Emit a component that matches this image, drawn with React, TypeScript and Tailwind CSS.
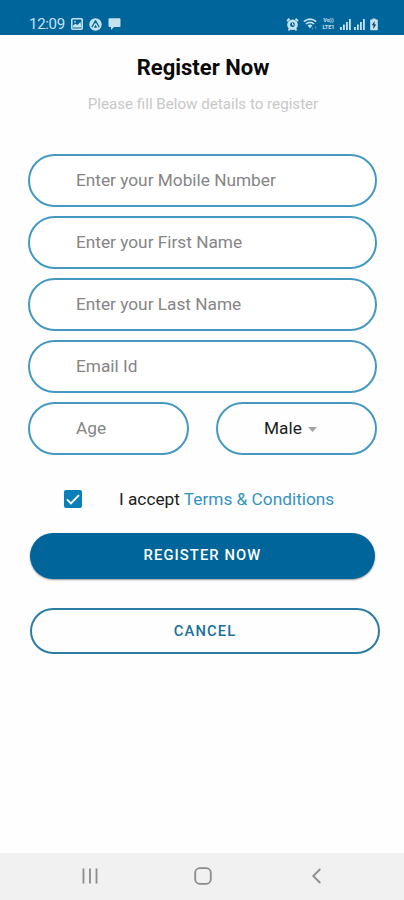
import { useState } from 'react';

const fieldClass =
    'h-[53px] rounded-full border-2 border-[#4598bf] bg-white pb-[2px] pl-[46px] text-[17.25px] text-[#222222] placeholder:text-[#858585] placeholder:opacity-100 outline-none';

const fields = [
    { name: 'mobile', type: 'tel', placeholder: 'Enter your Mobile Number' },
    { name: 'firstName', type: 'text', placeholder: 'Enter your First Name' },
    { name: 'lastName', type: 'text', placeholder: 'Enter your Last Name' },
    { name: 'email', type: 'email', placeholder: 'Email Id' },
];

function SignalIcon() {
    return (
        <svg className="h-[12px] w-[11px]" viewBox="0 0 11 12" fill="currentColor">
            <rect x="0" y="9" width="1.8" height="3" />
            <rect x="3" y="6.5" width="1.8" height="5.5" />
            <rect x="6" y="4" width="1.8" height="8" />
            <rect x="9" y="1" width="1.8" height="11" />
        </svg>
    );
}

function StatusBar() {
    return (
        <header className="flex h-[35px] items-end justify-between bg-[#00659a] pb-[3px] pl-[29px] pr-[26px] text-[#c5e2ef]">
            <div className="flex h-[16px] items-center">
                <span className="w-[42px] text-[15px] leading-4 tracking-[-0.3px]">12:09</span>
                {/* Picture */}
                <svg className="h-[12px] w-[12px]" viewBox="0 0 12 12">
                    <rect x="0.8" y="0.8" width="10.4" height="10.4" rx="1" fill="none" stroke="currentColor" strokeWidth="1.6" />
                    <path d="M2 9.5V7.5l2.5-1.8 1.8 1.4L9.5 4l0.9 5.5z" fill="currentColor" />
                    <circle cx="4" cy="3.8" r="0.9" fill="currentColor" />
                </svg>
                {/* App badge */}
                <svg className="ml-[6px] h-[13px] w-[13px]" viewBox="0 0 13 13">
                    <circle cx="6.5" cy="6.5" r="6.2" fill="currentColor" />
                    <path d="M6.5 2.5L2.8 9.3M6.5 2.5l3.7 6.8M6.5 2.8v2.5" stroke="#00659a" strokeWidth="1.3" fill="none" />
                    <path d="M4.8 9.8L6.5 6.7l1.7 3.1z" fill="#00659a" />
                </svg>
                {/* Message */}
                <svg className="ml-[6px] h-[12px] w-[13px]" viewBox="0 0 13 12" fill="currentColor">
                    <path d="M1.5 0.3h10q1 0 1 1v6.7q0 1-1 1H6L3 12V9H1.5q-1 0-1-1V1.3q0-1 1-1z" />
                </svg>
            </div>
            <div className="flex h-[16px] items-center">
                {/* Alarm */}
                <svg className="h-[13px] w-[13px]" viewBox="0 0 12 13" fill="none" stroke="currentColor">
                    <path d="M0.5 3L3 0.8M11.5 3L9 0.8M2 12.3l1.3-1.5M10 12.3l-1.3-1.5" strokeWidth="1.8" />
                    <circle cx="6" cy="6.7" r="5.3" fill="currentColor" stroke="none" />
                    <circle cx="6" cy="6.7" r="2.4" fill="#00659a" stroke="none" />
                    <path d="M6 4.8v2.1h1.8" strokeWidth="1" />
                </svg>
                {/* Wi-Fi */}
                <svg className="ml-[4px] h-[12px] w-[15px]" viewBox="0 0 15 12" fill="none" stroke="currentColor">
                    <path d="M0.8 3.7Q7-1.6 13.2 3.7M2.9 6Q7 2.6 11.1 6" strokeWidth="1.6" />
                    <path d="M4.6 7.4Q7 5.6 9.4 7.4L7 10.2z" fill="currentColor" stroke="none" />
                    <path d="M9.3 9.5v2M12.7 8.5v2" strokeWidth="1" opacity="0.5" />
                </svg>
                <div className="ml-[3px] flex w-[15px] flex-col items-center text-[5.5px] font-bold leading-[7px]">
                    <span>Vo))</span>
                    <span>LTE1</span>
                </div>
                <div className="ml-[4px] flex gap-[3px]">
                    <SignalIcon />
                    <SignalIcon />
                </div>
                {/* Battery */}
                <svg className="ml-[5px] h-[13px] w-[8px]" viewBox="0 0 8 13">
                    <path d="M2.5 0.5h3v1H7q0.8 0 0.8 0.8v9.2q0 0.8-0.8 0.8H1q-0.8 0-0.8-0.8V2.3q0-0.8 0.8-0.8h1.5z" fill="currentColor" />
                    <path d="M4.7 3L1.8 7.2h1.8L3.2 11l3-4.5H4.4z" fill="#0b3f5c" />
                </svg>
            </div>
        </header>
    );
}

function NavigationBar() {
    return (
        <nav className="flex h-[47px] items-center bg-[#f1f1f1] pb-[2px] pl-[82px] text-[#8c8c8c]">
            <button aria-label="Recent apps">
                <svg className="h-[16px] w-[16px]" viewBox="0 0 16 16" stroke="currentColor" strokeWidth="1.8">
                    <path d="M1.5 0.5v15M8 0.5v15M14.5 0.5v15" />
                </svg>
            </button>
            <button aria-label="Home" className="ml-[96px]">
                <svg className="h-[18px] w-[18px]" viewBox="0 0 18 18" fill="none" stroke="currentColor" strokeWidth="1.8">
                    <rect x="1.2" y="1.2" width="15.6" height="15.6" rx="4.5" />
                </svg>
            </button>
            <button aria-label="Back" className="ml-[100px]">
                <svg className="h-[16px] w-[9px]" viewBox="0 0 9 16" fill="none" stroke="currentColor" strokeWidth="1.8">
                    <path d="M8.3 1L1.2 8l7.1 7" />
                </svg>
            </button>
        </nav>
    );
}

export default function App() {
    const [accepted, setAccepted] = useState(true);

    return (
        <div className="flex h-[900px] w-full flex-col overflow-hidden bg-[#fefefe] font-['Roboto',sans-serif]">
            <StatusBar />

            <main className="flex-1 pt-[19px]">
                <h1 className="pl-[2px] text-center text-[22px] font-bold leading-[28px] text-[#0a0a0a]">Register Now</h1>
                <p className="mt-[12px] pl-[2px] text-center text-[15.15px] leading-[20px] text-[#c8c8c8]">
                    Please fill Below details to register
                </p>

                <form className="mt-[40px]" onSubmit={(e) => e.preventDefault()}>
                    <div className="ml-[28px] flex w-[349px] flex-col gap-[9px]">
                        {fields.map((field) => (
                            <input key={field.name} name={field.name} type={field.type} placeholder={field.placeholder} className={fieldClass} />
                        ))}
                        <div className="flex justify-between">
                            <input name="age" placeholder="Age" className={`${fieldClass} w-[161px]`} />
                            <button type="button" className="flex h-[53px] w-[161px] items-center rounded-full border-2 border-[#4598bf] pl-[46px] text-[17.25px] text-[#1c1c1c]">
                                Male
                                <svg className="ml-[6px] mt-[1px] h-[5px] w-[9px]" viewBox="0 0 9 5" fill="#a3a3a3">
                                    <path d="M0 0h9L4.5 5z" />
                                </svg>
                            </button>
                        </div>
                    </div>

                    <div className="mt-[32px] flex h-[24px] items-center pl-[64px] text-[17.25px]">
                        <button
                            type="button"
                            role="checkbox"
                            aria-checked={accepted}
                            onClick={() => setAccepted(!accepted)}
                            className="flex h-[18px] w-[18px] items-center justify-center rounded-[2px] bg-[#0b7fb8]"
                        >
                            {accepted && (
                                <svg className="h-[11px] w-[14px]" viewBox="0 0 14 11" fill="none" stroke="white" strokeWidth="1.9">
                                    <path d="M1 5.4l3.9 3.9L13 1.2" />
                                </svg>
                            )}
                        </button>
                        <p className="ml-[37px] mt-[1px] whitespace-nowrap text-[#1c1c1c]">
                            I accept <a className="text-[#3492c3]">Terms &amp; Conditions</a>
                        </p>
                    </div>

                    <button className="ml-[30px] mt-[22px] block h-[46px] w-[345px] rounded-full bg-[#00659a] pb-[1px] text-[14.75px] font-medium tracking-[1.1px] text-white shadow-[0_1px_2px_rgba(0,0,0,0.4)]">
                        REGISTER NOW
                    </button>
                    <button type="button" className="ml-[30px] mt-[29px] block h-[46px] w-[350px] rounded-full border-2 border-[#2b7ba3] text-[14.75px] font-medium tracking-[1.1px] text-[#1a719d]">
                        CANCEL
                    </button>
                </form>
            </main>

            <NavigationBar />
        </div>
    );
}
